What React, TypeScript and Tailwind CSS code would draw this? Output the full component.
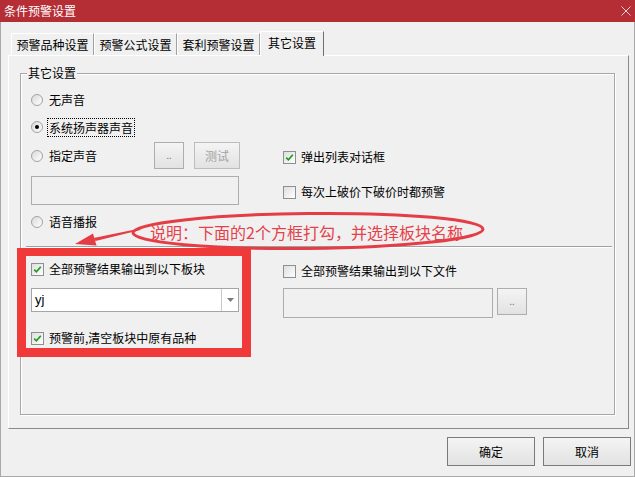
import React from "react";

const Radio = ({ checked }: { checked?: boolean }) => (
  <span className="w-[12px] h-[12px] rounded-full border border-[#a2a2a2] bg-gradient-to-br from-[#d9d9d9] to-white flex items-center justify-center shrink-0">
    {checked && <span className="w-[4px] h-[4px] rounded-full bg-black" />}
  </span>
);

const Check = ({ checked }: { checked?: boolean }) => (
  <span className="w-[13px] h-[13px] border border-[#8e8f8f] bg-gradient-to-br from-[#dedede] to-white flex items-center justify-center shrink-0">
    {checked && (
      <svg width="9" height="9" viewBox="0 0 9 9">
        <path d="M1.2 4.6 L3.4 6.8 L7.8 1.8" stroke="#229a22" strokeWidth="1.7" fill="none" />
      </svg>
    )}
  </span>
);

const Btn = ({ children, className = "" }: { children?: React.ReactNode; className?: string }) => (
  <div
    className={`border bg-gradient-to-b from-[#f4f4f4] to-[#e2e2e2] flex items-center justify-center ${className}`}
  >
    {children}
  </div>
);

const Tab = ({ label }: { label: string }) => (
  <div className="w-[83px] h-[22px] border-t border-l border-white border-r border-r-[#a0a0a0] flex items-center justify-center">
    {label}
  </div>
);

export default function App() {
  return (
    <div className="relative w-[635px] h-[477px] bg-[#f0f0f0] flex flex-col text-[12px] text-black font-['Noto_Sans_CJK_SC',sans-serif] overflow-hidden">
      {/* title bar */}
      <div className="h-[22px] bg-[#b52e35] flex items-center justify-between pl-[4px] pr-[4px] text-white shrink-0">
        <span className="leading-[22px]">条件预警设置</span>
        <svg width="10" height="10" viewBox="0 0 10 10">
          <path d="M0.5 0.5 L9.5 9.5 M9.5 0.5 L0.5 9.5" stroke="#f2d0d2" strokeWidth="1" />
        </svg>
      </div>

      <div className="flex-1 flex flex-col border-l border-r border-b border-[#a9a9a9] pl-[7px] pr-[3px]">
        {/* tabs */}
        <div className="mt-[9px] h-[24px] flex items-end pl-[3px] leading-none">
          <Tab label="预警品种设置" />
          <Tab label="预警公式设置" />
          <Tab label="套利预警设置" />
          <div className="relative z-10 -mb-[1px] w-[64px] h-[25px] bg-[#f0f0f0] border-t border-l border-white border-r border-r-[#6f6f6f] flex items-center justify-center pb-[2px]">
            其它设置
          </div>
        </div>

        {/* panel */}
        <div className="w-[621px] h-[374px] border-t border-l border-white border-r border-b border-r-[#8a8a8a] border-b-[#8a8a8a]">
          <div className="ml-[11px] mt-[17px] w-[595px] h-[342px] border border-[#a7a7a7] shadow-[1px_1px_0_white,inset_1px_1px_0_white] flex flex-col">
            <span className="self-start ml-[6px] -mt-[9px] h-[16px] leading-[16px] px-[1px] bg-[#f0f0f0]">
              其它设置
            </span>

            <div className="pl-[10px] flex flex-col">
              {/* top section */}
              <div className="grid grid-cols-[252px_1fr]">
                <div className="flex flex-col">
                  <div className="mt-[9px] h-[20px] flex items-center gap-[6px]">
                    <Radio />
                    <span>无声音</span>
                  </div>
                  <div className="mt-[7px] h-[20px] flex items-center gap-[4px]">
                    <Radio checked />
                    <span className="border border-dotted border-black px-[1px] leading-[17px]">系统扬声器声音</span>
                  </div>
                  <div className="mt-[5px] h-[27px] flex items-center">
                    <div className="w-[123px] flex items-center gap-[6px]">
                      <Radio />
                      <span>指定声音</span>
                    </div>
                    <Btn className="w-[30px] h-[27px] border-[#adadad] text-[#777] text-[9px]">..</Btn>
                    <Btn className="ml-[10px] w-[46px] h-[27px] border-[#bdbdbd] text-[#a3a3a3]">测试</Btn>
                  </div>
                  <div className="mt-[7px] h-[29px] w-[208px] border border-[#adadad]" />
                  <div className="mt-[7px] h-[20px] flex items-center gap-[6px]">
                    <Radio />
                    <span>语音播报</span>
                  </div>
                </div>
                <div className="flex flex-col">
                  <div className="mt-[66px] h-[20px] flex items-center gap-[5px]">
                    <Check checked />
                    <span>弹出列表对话框</span>
                  </div>
                  <div className="mt-[15px] h-[20px] flex items-center gap-[5px]">
                    <Check />
                    <span>每次上破价下破价时都预警</span>
                  </div>
                </div>
              </div>

              {/* separator */}
              <div className="-ml-[5px] mt-[14px] w-[586px] h-px bg-[#a0a0a0]" />
              <div className="-ml-[5px] w-[586px] h-px bg-white" />

              {/* bottom section */}
              <div className="grid grid-cols-[252px_1fr]">
                <div className="flex flex-col">
                  <div className="mt-[11px] h-[20px] flex items-center gap-[5px]">
                    <Check checked />
                    <span>全部预警结果输出到以下板块</span>
                  </div>
                  <div className="mt-[9px] h-[24px] w-[208px] border border-[#a5a5a5] bg-white flex">
                    <span className="flex-1 pl-[3px] leading-[22px] font-['Liberation_Sans',sans-serif] text-[13px]">yj</span>
                    <div className="w-[17px] border-l border-[#c8c8c8] flex items-center justify-center">
                      <svg width="7" height="4" viewBox="0 0 7 4">
                        <path d="M0 0 L7 0 L3.5 4 Z" fill="#7a7a7a" />
                      </svg>
                    </div>
                  </div>
                  <div className="mt-[16px] h-[20px] flex items-center gap-[5px]">
                    <Check checked />
                    <span>预警前,清空板块中原有品种</span>
                  </div>
                </div>
                <div className="flex flex-col">
                  <div className="mt-[13px] h-[20px] flex items-center gap-[5px]">
                    <Check />
                    <span>全部预警结果输出到以下文件</span>
                  </div>
                  <div className="mt-[7px] flex items-start gap-[4px]">
                    <div className="w-[210px] h-[30px] border border-[#adadad]" />
                    <Btn className="w-[30px] h-[27px] border-[#adadad] text-[#777] text-[9px]">..</Btn>
                  </div>
                </div>
              </div>
            </div>
          </div>
        </div>

        {/* footer */}
        <div className="mt-[8px] flex justify-end gap-[8px]">
          <Btn className="w-[88px] h-[29px] border-[#7a7a7a]">确定</Btn>
          <Btn className="w-[88px] h-[29px] border-[#7a7a7a]">取消</Btn>
        </div>
      </div>

      {/* annotation: red highlight box */}
      <div className="absolute left-[17px] top-[248px] w-[234px] h-[109px] border-[9px] border-t-[8px] border-[#f03a3a] pointer-events-none" />

      {/* annotation: ellipse + arrow */}
      <svg className="absolute left-0 top-[200px] pointer-events-none" width="500" height="60" viewBox="0 200 500 60">
        <ellipse cx="308" cy="231" rx="175" ry="17.5" fill="none" stroke="#e53d46" strokeWidth="3" transform="rotate(-0.6 308 231)" />
        <polygon points="140,228.5 140.5,230 95.5,241 93.5,238" fill="#e53d46" />
        <polygon points="75,244 93,233.5 96.5,245.5" fill="#e53d46" />
      </svg>
      <div className="absolute left-[150px] top-[222px] text-[16px] leading-[20px] text-[#e5414a] whitespace-nowrap">
        说明：下面的2个方框打勾，并选择板块名称
      </div>
    </div>
  );
}
